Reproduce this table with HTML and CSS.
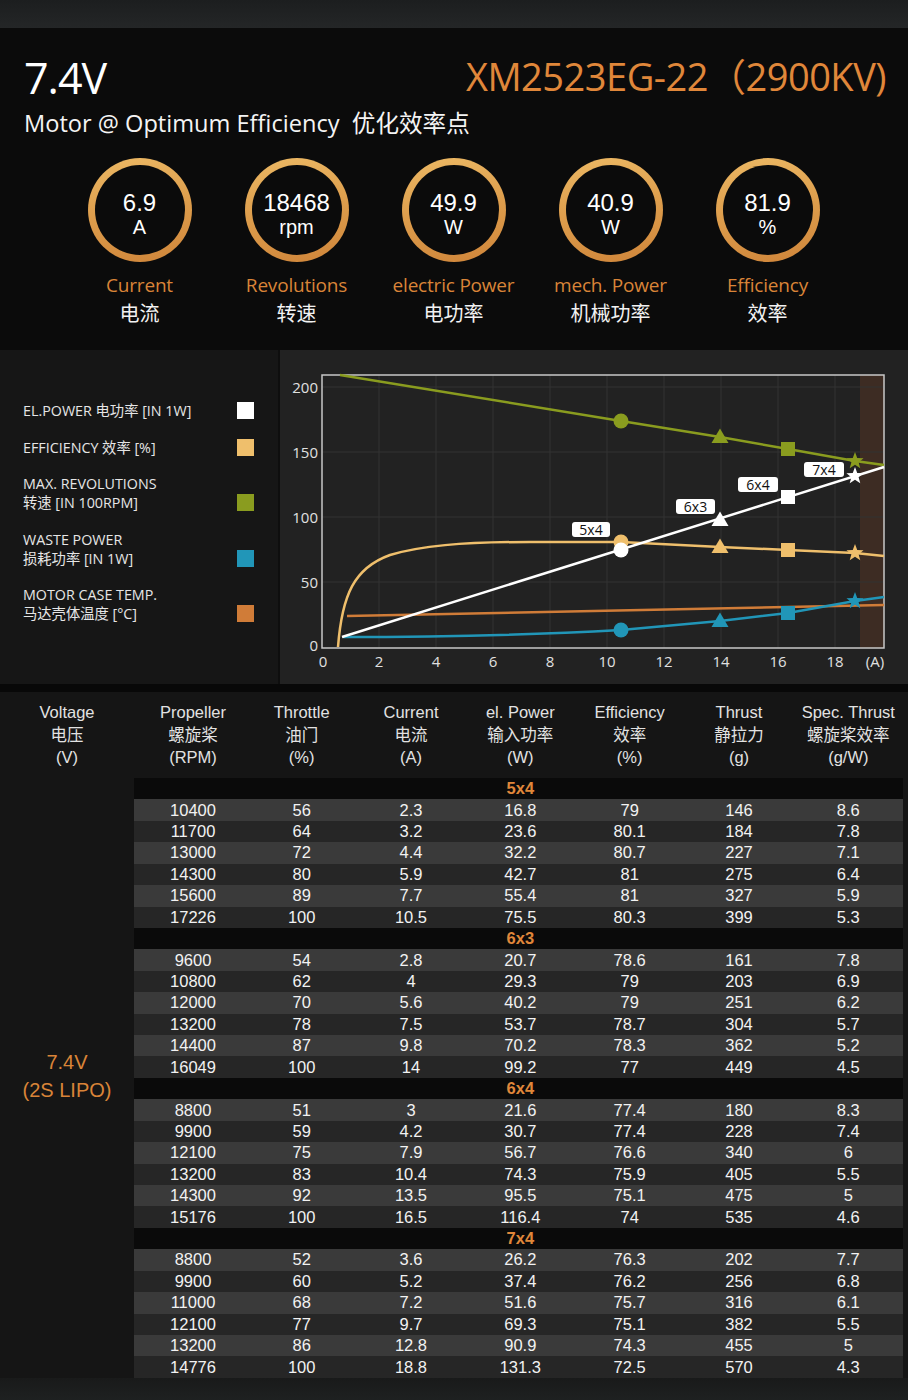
FILE: index.html
```html
<!DOCTYPE html>
<html lang="zh">
<head>
<meta charset="utf-8">
<title>XM2523EG-22 7.4V</title>
<link rel="stylesheet" href="styles.css">
</head>
<body>
<div class="page">
  <div class="topbar"></div>

  <section class="hero">
    <div class="title-row">
      <div class="volt">7.4V</div>
      <div class="model">XM2523EG-22（2900KV)</div>
    </div>
    <div class="subtitle">Motor @ Optimum Efficiency&nbsp; 优化效率点</div>

    <div class="stats">
      <div class="stat">
        <div class="ring"><div class="ring-inner"><span class="val">6.9</span><span class="unit">A</span></div></div>
        <div class="lbl-en">Current</div>
        <div class="lbl-cn">电流</div>
      </div>
      <div class="stat">
        <div class="ring"><div class="ring-inner"><span class="val">18468</span><span class="unit">rpm</span></div></div>
        <div class="lbl-en">Revolutions</div>
        <div class="lbl-cn">转速</div>
      </div>
      <div class="stat">
        <div class="ring"><div class="ring-inner"><span class="val">49.9</span><span class="unit">W</span></div></div>
        <div class="lbl-en">electric Power</div>
        <div class="lbl-cn">电功率</div>
      </div>
      <div class="stat">
        <div class="ring"><div class="ring-inner"><span class="val">40.9</span><span class="unit">W</span></div></div>
        <div class="lbl-en">mech. Power</div>
        <div class="lbl-cn">机械功率</div>
      </div>
      <div class="stat">
        <div class="ring"><div class="ring-inner"><span class="val">81.9</span><span class="unit">%</span></div></div>
        <div class="lbl-en">Efficiency</div>
        <div class="lbl-cn">效率</div>
      </div>
    </div>
  </section>

  <section class="chart-section">
    <div class="legend">
      <div class="leg-item"><div class="leg-text">EL.POWER 电功率 [IN 1W]</div><span class="sw sw-white"></span></div>
      <div class="leg-item"><div class="leg-text">EFFICIENCY 效率 [%]</div><span class="sw sw-yellow"></span></div>
      <div class="leg-item"><div class="leg-text">MAX. REVOLUTIONS<br>转速 [IN 100RPM]</div><span class="sw sw-green"></span></div>
      <div class="leg-item"><div class="leg-text">WASTE POWER<br>损耗功率 [IN 1W]</div><span class="sw sw-blue"></span></div>
      <div class="leg-item"><div class="leg-text">MOTOR CASE TEMP.<br>马达壳体温度 [°C]</div><span class="sw sw-orange"></span></div>
    </div>
    <div class="chart">
      <svg class="plot" width="628" height="334" viewBox="0 0 628 334" xmlns="http://www.w3.org/2000/svg">
        <defs>
          <polygon id="star" points="0,-9 2.23,-3.07 8.56,-2.78 3.61,1.17 5.29,7.28 0,3.8 -5.29,7.28 -3.61,1.17 -8.56,-2.78 -2.23,-3.07"/>
          <polygon id="tri" points="0,-8.5 8.5,6 -8.5,6"/>
          <rect id="sq" x="-7" y="-7" width="14" height="14"/>
          <circle id="dot" cx="0" cy="0" r="7.5"/>
        </defs>
        <rect x="580" y="25" width="24" height="273" fill="#3d2c23"/>
        <g stroke="#323232" stroke-width="1">
          <line x1="99" y1="25" x2="99" y2="298"/>
          <line x1="156" y1="25" x2="156" y2="298"/>
          <line x1="213" y1="25" x2="213" y2="298"/>
          <line x1="270" y1="25" x2="270" y2="298"/>
          <line x1="327" y1="25" x2="327" y2="298"/>
          <line x1="384" y1="25" x2="384" y2="298"/>
          <line x1="441" y1="25" x2="441" y2="298"/>
          <line x1="498" y1="25" x2="498" y2="298"/>
          <line x1="555" y1="25" x2="555" y2="298"/>
          <line x1="42" y1="37" x2="604" y2="37"/>
          <line x1="42" y1="102" x2="604" y2="102"/>
          <line x1="42" y1="167" x2="604" y2="167"/>
          <line x1="42" y1="232" x2="604" y2="232"/>
        </g>
        <rect x="42" y="25" width="562" height="273" fill="none" stroke="#c8c8c8" stroke-width="1.5"/>

        <g class="ylab">
          <text x="38" y="43">200</text>
          <text x="38" y="108">150</text>
          <text x="38" y="173">100</text>
          <text x="38" y="238">50</text>
          <text x="38" y="301">0</text>
        </g>
        <g class="xlab">
          <text x="43" y="317">0</text>
          <text x="99" y="317">2</text>
          <text x="156" y="317">4</text>
          <text x="213" y="317">6</text>
          <text x="270" y="317">8</text>
          <text x="327" y="317">10</text>
          <text x="384" y="317">12</text>
          <text x="441" y="317">14</text>
          <text x="498" y="317">16</text>
          <text x="555" y="317">18</text>
          <text x="595" y="317">(A)</text>
        </g>

        <!-- case temp -->
        <path d="M67,266 L604,255" stroke="#d07c38" stroke-width="2.5" fill="none"/>
        <!-- waste power -->
        <path d="M63,287 C150,287 250,285 341,280 L440,271 L508,263 L575,251 L604,247" stroke="#2196b8" stroke-width="2.5" fill="none"/>
        <!-- efficiency -->
        <path d="M58,297 C62,245 74,218 110,205 C140,196 180,192 250,192 L341,192 L440,197 L508,200 L575,203 L604,206" stroke="#efbf6c" stroke-width="2.5" fill="none"/>
        <!-- revolutions -->
        <path d="M60,25 L341,71 L440,87 L508,99 L575,111 L604,115" stroke="#8a9c1f" stroke-width="2.5" fill="none"/>
        <!-- el power -->
        <path d="M62,287 L604,117" stroke="#ffffff" stroke-width="2.5" fill="none"/>

        <g fill="#8a9c1f">
          <use href="#dot" x="341" y="71"/>
          <use href="#tri" x="440" y="87"/>
          <use href="#sq" x="508" y="99"/>
          <use href="#star" x="575" y="111"/>
        </g>
        <g fill="#efbf6c">
          <use href="#dot" x="341" y="192"/>
          <use href="#tri" x="440" y="197"/>
          <use href="#sq" x="508" y="200"/>
          <use href="#star" x="575" y="203"/>
        </g>
        <g fill="#2196b8">
          <use href="#dot" x="341" y="280"/>
          <use href="#tri" x="440" y="271"/>
          <use href="#sq" x="508" y="263"/>
          <use href="#star" x="575" y="251"/>
        </g>
        <g fill="#ffffff">
          <use href="#dot" x="341" y="200"/>
          <use href="#tri" x="440" y="170"/>
          <use href="#sq" x="508" y="147"/>
          <use href="#star" x="575" y="126"/>
        </g>

        <g class="tag">
          <rect x="292" y="172" width="38" height="15" rx="3"/>
          <text x="311" y="184.5">5x4</text>
          <rect x="396" y="149" width="39" height="15" rx="3"/>
          <text x="415.5" y="161.5">6x3</text>
          <rect x="458" y="127" width="40" height="15" rx="3"/>
          <text x="478" y="139.5">6x4</text>
          <rect x="524" y="112" width="40" height="15" rx="3"/>
          <text x="544" y="124.5">7x4</text>
        </g>
      </svg>
    </div>
  </section>

  <section class="table-section">
    <div class="thead">
      <div class="th">Voltage<br>电压<br>(V)</div>
      <div class="th th-first">Propeller<br>螺旋桨<br>(RPM)</div>
      <div class="th">Throttle<br>油门<br>(%)</div>
      <div class="th">Current<br>电流<br>(A)</div>
      <div class="th">el. Power<br>输入功率<br>(W)</div>
      <div class="th">Efficiency<br>效率<br>(%)</div>
      <div class="th">Thrust<br>静拉力<br>(g)</div>
      <div class="th">Spec. Thrust<br>螺旋桨效率<br>(g/W)</div>
    </div>
    <div class="tbody">
      <div class="volt-cell">7.4V<br>(2S LIPO)</div>
      <div class="rows">
        <div class="row grp"><span class="grp-label">5x4</span></div>
        <div class="row lt"><span>10400</span><span>56</span><span>2.3</span><span>16.8</span><span>79</span><span>146</span><span>8.6</span></div>
        <div class="row dk"><span>11700</span><span>64</span><span>3.2</span><span>23.6</span><span>80.1</span><span>184</span><span>7.8</span></div>
        <div class="row lt"><span>13000</span><span>72</span><span>4.4</span><span>32.2</span><span>80.7</span><span>227</span><span>7.1</span></div>
        <div class="row dk"><span>14300</span><span>80</span><span>5.9</span><span>42.7</span><span>81</span><span>275</span><span>6.4</span></div>
        <div class="row lt"><span>15600</span><span>89</span><span>7.7</span><span>55.4</span><span>81</span><span>327</span><span>5.9</span></div>
        <div class="row dk"><span>17226</span><span>100</span><span>10.5</span><span>75.5</span><span>80.3</span><span>399</span><span>5.3</span></div>

        <div class="row grp"><span class="grp-label">6x3</span></div>
        <div class="row lt"><span>9600</span><span>54</span><span>2.8</span><span>20.7</span><span>78.6</span><span>161</span><span>7.8</span></div>
        <div class="row dk"><span>10800</span><span>62</span><span>4</span><span>29.3</span><span>79</span><span>203</span><span>6.9</span></div>
        <div class="row lt"><span>12000</span><span>70</span><span>5.6</span><span>40.2</span><span>79</span><span>251</span><span>6.2</span></div>
        <div class="row dk"><span>13200</span><span>78</span><span>7.5</span><span>53.7</span><span>78.7</span><span>304</span><span>5.7</span></div>
        <div class="row lt"><span>14400</span><span>87</span><span>9.8</span><span>70.2</span><span>78.3</span><span>362</span><span>5.2</span></div>
        <div class="row dk"><span>16049</span><span>100</span><span>14</span><span>99.2</span><span>77</span><span>449</span><span>4.5</span></div>

        <div class="row grp"><span class="grp-label">6x4</span></div>
        <div class="row lt"><span>8800</span><span>51</span><span>3</span><span>21.6</span><span>77.4</span><span>180</span><span>8.3</span></div>
        <div class="row dk"><span>9900</span><span>59</span><span>4.2</span><span>30.7</span><span>77.4</span><span>228</span><span>7.4</span></div>
        <div class="row lt"><span>12100</span><span>75</span><span>7.9</span><span>56.7</span><span>76.6</span><span>340</span><span>6</span></div>
        <div class="row dk"><span>13200</span><span>83</span><span>10.4</span><span>74.3</span><span>75.9</span><span>405</span><span>5.5</span></div>
        <div class="row lt"><span>14300</span><span>92</span><span>13.5</span><span>95.5</span><span>75.1</span><span>475</span><span>5</span></div>
        <div class="row dk"><span>15176</span><span>100</span><span>16.5</span><span>116.4</span><span>74</span><span>535</span><span>4.6</span></div>

        <div class="row grp"><span class="grp-label">7x4</span></div>
        <div class="row lt"><span>8800</span><span>52</span><span>3.6</span><span>26.2</span><span>76.3</span><span>202</span><span>7.7</span></div>
        <div class="row dk"><span>9900</span><span>60</span><span>5.2</span><span>37.4</span><span>76.2</span><span>256</span><span>6.8</span></div>
        <div class="row lt"><span>11000</span><span>68</span><span>7.2</span><span>51.6</span><span>75.7</span><span>316</span><span>6.1</span></div>
        <div class="row dk"><span>12100</span><span>77</span><span>9.7</span><span>69.3</span><span>75.1</span><span>382</span><span>5.5</span></div>
        <div class="row lt"><span>13200</span><span>86</span><span>12.8</span><span>90.9</span><span>74.3</span><span>455</span><span>5</span></div>
        <div class="row dk"><span>14776</span><span>100</span><span>18.8</span><span>131.3</span><span>72.5</span><span>570</span><span>4.3</span></div>
      </div>
    </div>
  </section>
  <div class="footer"></div>
</div>
</body>
</html>
```

FILE: styles.css
```css
* { box-sizing: border-box; }

html, body {
  margin: 0;
  padding: 0;
  background: #0b0b0b;
}

.page {
  width: 908px;
  font-family: "Open Sans", "Noto Sans CJK SC", sans-serif;
  color: #f2f2f2;
}

.topbar {
  height: 28px;
  background: linear-gradient(#1c1e1f, #242627);
}

/* ---------- hero ---------- */
.hero {
  height: 322px;
  background: #0b0b0b;
  padding: 26px 22px 0 24px;
}

.title-row {
  display: flex;
  justify-content: space-between;
  align-items: flex-start;
}

.volt {
  font-size: 43px;
  line-height: 48px;
  font-weight: 400;
  letter-spacing: -1px;
  color: #ffffff;
}

.model {
  font-size: 38px;
  line-height: 44px;
  color: #e0873a;
  letter-spacing: -0.5px;
}

.subtitle {
  font-size: 23.6px;
  line-height: 30px;
  margin-top: 6px;
  color: #f4f4f4;
  letter-spacing: 0;
}

.stats {
  display: grid;
  grid-template-columns: repeat(5, 157px);
  margin-top: 20px;
  margin-left: 37px;
}

.stat {
  display: flex;
  flex-direction: column;
  align-items: center;
}

.ring {
  width: 104px;
  height: 104px;
  border-radius: 50%;
  padding: 7px;
  background: linear-gradient(170deg, #ecb965 0%, #dd9d4c 50%, #cf853a 100%);
}

.ring-inner {
  width: 100%;
  height: 100%;
  border-radius: 50%;
  background: #0b0b0b;
  display: flex;
  flex-direction: column;
  align-items: center;
  justify-content: center;
  font-family: "Liberation Sans", Arial, sans-serif;
  color: #ffffff;
  padding-top: 8px;
}

.val {
  font-size: 24px;
  line-height: 26px;
}

.unit {
  font-size: 20px;
  line-height: 22px;
}

.lbl-en {
  margin-top: 10px;
  font-size: 19px;
  line-height: 26px;
  color: #d98438;
  letter-spacing: -0.2px;
}

.lbl-cn {
  font-size: 20px;
  line-height: 28px;
  margin-top: 2px;
  color: #f2f2f2;
}

/* ---------- chart ---------- */
.chart-section {
  display: flex;
  height: 342px;
  border-bottom: 8px solid #080808;
}

.legend {
  width: 280px;
  background: #161616;
  border-right: 2px solid #0e0e0e;
  padding: 51px 0 0 23px;
  display: flex;
  flex-direction: column;
  gap: 17.5px;
}

.leg-item {
  display: grid;
  grid-template-columns: 214px 17px;
  align-items: end;
}

.leg-text {
  font-size: 14.3px;
  line-height: 19px;
  color: #e6e6e6;
  letter-spacing: 0;
}

.sw {
  width: 17px;
  height: 17px;
  margin-bottom: 1px;
}
.sw-white { background: #ffffff; }
.sw-yellow { background: #efbf6c; }
.sw-green { background: #8a9c1f; }
.sw-blue { background: #2196b8; }
.sw-orange { background: #d07c38; }

.chart {
  flex: 1;
  background: #222222;
}

.plot { display: block; }

.ylab text {
  font-family: "Open Sans", sans-serif;
  font-size: 15px;
  fill: #e0e0e0;
  text-anchor: end;
}

.xlab text {
  font-family: "Open Sans", sans-serif;
  font-size: 15px;
  fill: #e0e0e0;
  text-anchor: middle;
}

.tag rect { fill: #ffffff; }
.tag text {
  font-family: "Open Sans", sans-serif;
  font-size: 14px;
  fill: #111111;
  text-anchor: middle;
}

/* ---------- table ---------- */
.table-section {
  background: #151515;
  padding-top: 9px;
  font-family: "Liberation Sans", Arial, "Noto Sans CJK SC", sans-serif;
}

.thead {
  display: grid;
  grid-template-columns: 134px 113px repeat(6, 109.33px);
  height: 77px;
}

.th {
  text-align: center;
  font-size: 16.5px;
  line-height: 22.5px;
  color: #e2e2e2;
}

.th-first { padding-left: 5px; }

.tbody {
  display: grid;
  grid-template-columns: 134px 769px;
}

.volt-cell {
  display: flex;
  align-items: center;
  justify-content: center;
  text-align: center;
  font-size: 20px;
  line-height: 28px;
  color: #d98438;
  padding-bottom: 4px;
}

.rows {
  display: flex;
  flex-direction: column;
}

.row {
  display: grid;
  grid-template-columns: 113px repeat(6, 1fr);
  height: 21.43px;
  align-items: center;
  font-size: 16.5px;
  line-height: 19px;
  color: #f2f2f2;
  text-align: center;
}

.row span:first-child { padding-left: 5px; }

.row.lt { background: #3a3a3a; }
.row.dk { background: #262626; }
.row.grp { background: #0a0a0a; }

.row.grp .grp-label {
  grid-column: 4;
  padding-left: 0;
  font-weight: 700;
  color: #e0873a;
}

.footer {
  height: 30px;
  background: linear-gradient(#191a1a, #202323);
}
```
